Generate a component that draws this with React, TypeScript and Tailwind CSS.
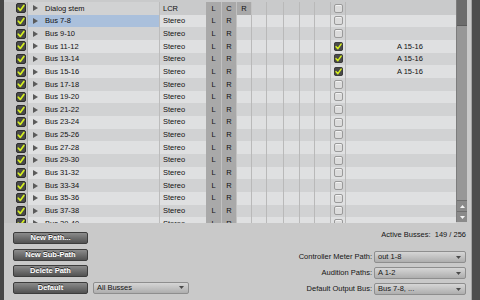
import React from 'react';

type BusRow = {
  name: string;
  fmt: 'LCR' | 'Stereo';
  selected?: boolean;
  assigned?: boolean;
};

const ROWS: BusRow[] = [
  { name: 'Dialog stem', fmt: 'LCR' },
  { name: 'Bus 7-8', fmt: 'Stereo', selected: true },
  { name: 'Bus 9-10', fmt: 'Stereo' },
  { name: 'Bus 11-12', fmt: 'Stereo', assigned: true },
  { name: 'Bus 13-14', fmt: 'Stereo', assigned: true },
  { name: 'Bus 15-16', fmt: 'Stereo', assigned: true },
  { name: 'Bus 17-18', fmt: 'Stereo' },
  { name: 'Bus 19-20', fmt: 'Stereo' },
  { name: 'Bus 21-22', fmt: 'Stereo' },
  { name: 'Bus 23-24', fmt: 'Stereo' },
  { name: 'Bus 25-26', fmt: 'Stereo' },
  { name: 'Bus 27-28', fmt: 'Stereo' },
  { name: 'Bus 29-30', fmt: 'Stereo' },
  { name: 'Bus 31-32', fmt: 'Stereo' },
  { name: 'Bus 33-34', fmt: 'Stereo' },
  { name: 'Bus 35-36', fmt: 'Stereo' },
  { name: 'Bus 37-38', fmt: 'Stereo' },
  { name: 'Bus 39-40', fmt: 'Stereo' },
];

// widths of the 8 channel columns after the format column
const CHANNEL_W = ['w-[16px]', 'w-[15px]', 'w-[15px]', 'w-[15px]', 'w-[17px]', 'w-[16px]', 'w-[15px]', 'w-[16px]'];

function CheckOn({ size = 10 }: { size?: number }) {
  return (
    <svg width={size} height={size} viewBox="0 0 10 10" className="block">
      <rect x="0.5" y="0.5" width="9" height="9" rx="1.5" fill="#4a4a4a" stroke="#2e2e2e" />
      <path d="M2.3 5.2 L4.3 7.4 L7.9 2.4" fill="none" stroke="#d6f020" strokeWidth="1.7" strokeLinecap="round" strokeLinejoin="round" />
    </svg>
  );
}

function CheckOff() {
  return (
    <div className="w-[9px] h-[9px] rounded-[2px] border border-[#9a9a9a] bg-[#dcdcdc] shadow-[inset_0_1px_0_#f2f2f2]" />
  );
}

function Triangle() {
  return (
    <svg width="5" height="6" viewBox="0 0 5 6" className="block">
      <path d="M0 0 L5 3 L0 6 Z" fill="#5a5a5a" />
    </svg>
  );
}

function TableRow({ row, index }: { row: BusRow; index: number }) {
  const dark = index % 2 === 0;
  const rowBg = dark ? (index === 0 ? 'bg-[#c9cacb]' : 'bg-[#d1d2d3]') : 'bg-[#dfe0e1]';
  const nameBg = row.selected ? 'bg-[#aac0dc]' : dark ? 'bg-[#d1d2d3]' : 'bg-[#dfe0e1]';
  const active = row.fmt === 'LCR' ? ['L', 'C', 'R'] : ['L', 'R'];
  const h = index === 0 ? 'h-[14.67px] pt-[2px]' : 'h-[12.67px]';

  return (
    <div className={`flex shrink-0 ${h} ${rowBg}`}>
      <div className="w-[24px] h-full flex items-center pl-[12px] bg-[#c3c3c3] border-r border-[#a9a9a9]">
        <CheckOn />
      </div>
      <div className={`w-[132px] h-full flex items-center pl-[5px] border-r border-[#bcbcbc] ${nameBg}`}>
        <Triangle />
        <span className="ml-[7px] text-[7.5px] leading-none text-[#111]">{row.name}</span>
      </div>
      <div className="w-[46px] h-full flex items-center pl-[3px] text-[7.5px] leading-none text-[#111]">{row.fmt}</div>
      {CHANNEL_W.map((w, i) => {
        const label = active[i];
        return (
          <div
            key={i}
            className={`${w} h-full flex items-center justify-center text-[7.5px] leading-none text-[#111] border-r ${
              label ? 'bg-[#a9a9a9] border-[#c2c2c2]' : 'border-[#b9b9b9]'
            }`}
          >
            {label}
          </div>
        );
      })}
      <div className="w-[15px] h-full flex items-center pl-[3px] border-r border-[#b9b9b9]">
        {row.assigned ? <CheckOn size={9} /> : <CheckOff />}
      </div>
      <div className="w-[110px] h-full flex items-center pl-[51px] text-[7.5px] leading-none text-[#111]">
        {row.assigned ? 'A 15-16' : ''}
      </div>
    </div>
  );
}

function Scrollbar() {
  return (
    <div className="w-[11px] h-[222px] flex flex-col bg-[#979797] border-l border-[#7d7d7d]">
      <div className="h-[26px] bg-[#6c6c6c] border-b border-[#5a5a5a]" />
      <div className="flex-1" />
      <div className="h-[11px] flex items-center justify-center bg-[#8a8a8a] border-t border-[#6f6f6f]">
        <svg width="5" height="3" viewBox="0 0 5 3"><path d="M0 3 L2.5 0 L5 3 Z" fill="#f4f4f4" /></svg>
      </div>
      <div className="h-[11px] flex items-center justify-center bg-[#8a8a8a] border-t border-[#6f6f6f]">
        <svg width="5" height="3" viewBox="0 0 5 3"><path d="M0 0 L2.5 3 L5 0 Z" fill="#f4f4f4" /></svg>
      </div>
    </div>
  );
}

function DarkButton({ label }: { label: string }) {
  return (
    <button className="w-[75px] h-[12px] rounded-[2px] border border-[#3d3d3d] bg-gradient-to-b from-[#8c8c8c] to-[#525252] text-white text-[7.5px] font-bold leading-none [text-shadow:0_-1px_0_#2a2a2a] flex items-center justify-center">
      {label}
    </button>
  );
}

function Select({ value, width }: { value: string; width: string }) {
  return (
    <div className={`${width} h-[12px] rounded-[2px] border border-[#8e8e8e] bg-gradient-to-b from-[#d6d6d6] to-[#aeaeae] flex items-center justify-between pl-[3px] pr-[4px]`}>
      <span className="text-[7.5px] leading-none text-[#151515]">{value}</span>
      <svg width="5" height="3" viewBox="0 0 5 3"><path d="M0 0 L2.5 3 L5 0 Z" fill="#4a4a4a" /></svg>
    </div>
  );
}

function LabeledSelect({ label, value }: { label: string; value: string }) {
  return (
    <div className="flex items-center h-[12px] gap-[2px]">
      <span className="text-[7.5px] leading-none text-[#151515]">{label}</span>
      <Select value={value} width="w-[92px]" />
    </div>
  );
}

export default function App() {
  return (
    <div
      className="w-[480px] h-[300px] flex overflow-hidden bg-[#c9c9c9]"
      style={{ fontFamily: '"Liberation Sans", Arial, sans-serif' }}
    >
      <div className="w-[4px] h-full bg-[#474747]" />

      <div className="w-[467px] h-full flex flex-col">
        {/* Busses table */}
        <div className="flex h-[223px] shrink-0">
          <div className="w-[452px] h-[223px] flex flex-col overflow-hidden">
            {ROWS.map((row, i) => (
              <TableRow key={row.name} row={row} index={i} />
            ))}
          </div>
          <Scrollbar />
        </div>

        {/* Bottom controls */}
        <div className="flex-1 flex justify-between">
          <div className="flex flex-col gap-[4.5px] pl-[9px] pt-[9px]">
            <DarkButton label="New Path..." />
            <DarkButton label="New Sub-Path" />
            <DarkButton label="Delete Path" />
            <div className="flex items-center gap-[5px]">
              <DarkButton label="Default" />
              <Select value="All Busses" width="w-[96px]" />
            </div>
          </div>
          <div className="flex flex-col items-end pr-[5px] pt-[7px]">
            <div className="h-[10px] flex items-center text-[7.5px] leading-none text-[#151515]">
              Active Busses:&nbsp;&nbsp;149 / 256
            </div>
            <div className="flex flex-col items-end gap-[4px] mt-[11px]">
              <LabeledSelect label="Controller Meter Path:" value="out 1-8" />
              <LabeledSelect label="Audition Paths:" value="A 1-2" />
              <LabeledSelect label="Default Output Bus:" value="Bus 7-8, ..." />
            </div>
          </div>
        </div>
      </div>

      <div className="w-[1px] h-full bg-[#a4a4a4]" />
      <div className="flex-1 h-full bg-[#4d4d4d]" />
    </div>
  );
}
